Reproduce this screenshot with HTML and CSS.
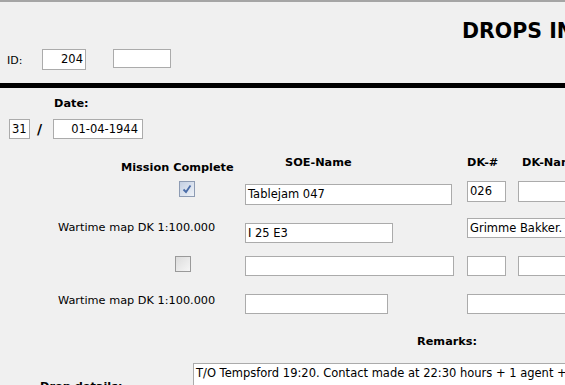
FILE: index.html
```html
<!DOCTYPE html>
<html lang="en">
<head>
  <meta charset="UTF-8" />
  <title>Drops</title>
  <link rel="stylesheet" href="styles.css">
</head>
<body>
<div class="form">
  <section class="header">
    <h1 class="title">DROPS INFORMATION</h1>
    <div class="id-row">
      <span class="lbl id-lbl">ID:</span>
      <div class="box id-box right">204</div>
      <div class="box id-extra"></div>
    </div>
  </section>
  <div class="rule"></div>

  <section class="main">
    <div class="row date-head">
      <span class="bold date-lbl">Date:</span>
    </div>
    <div class="row date-row">
      <div class="box day-box">31</div>
      <span class="bold slash">/</span>
      <div class="box date-box right">01-04-1944</div>
    </div>

    <div class="row heads">
      <span class="bold mission-lbl">Mission Complete</span>
      <span class="bold soe-lbl">SOE-Name</span>
      <span class="bold dknr-lbl">DK-#</span>
      <span class="bold dkname-lbl">DK-Name</span>
    </div>

    <div class="row r1">
      <span class="check checked c1">
        <svg width="10" height="10" viewBox="0 0 10 10"><path d="M1.5 5.5 L4 8 L8.5 1.5" fill="none" stroke="#4a6ca8" stroke-width="1.8"/></svg>
      </span>
      <div class="box soe1">Tablejam 047</div>
      <div class="box dk1">026</div>
      <div class="box dkn1"></div>
    </div>

    <div class="row r2">
      <span class="lbl map-lbl">Wartime map DK 1:100.000</span>
      <div class="box map1">I 25 E3</div>
      <div class="box place1">Grimme Bakker.</div>
    </div>

    <div class="row r3">
      <span class="check c2"></span>
      <div class="box soe2"></div>
      <div class="box dk2"></div>
      <div class="box dkn2"></div>
    </div>

    <div class="row r4">
      <span class="lbl map-lbl map-lbl2">Wartime map DK 1:100.000</span>
      <div class="box map2"></div>
      <div class="box place2"></div>
    </div>

    <div class="row remarks-head">
      <span class="bold remarks-lbl">Remarks:</span>
    </div>
    <div class="row remarks-row">
      <span class="bold notes-lbl">Drop details:</span>
      <div class="box remarks">T/O Tempsford 19:20. Contact made at 22:30 hours + 1 agent + 6 containers dropped.</div>
    </div>
  </section>
</div>
</body>
</html>
```

FILE: styles.css
```css
body {
  margin: 0;
  background-color: #f0f0f0;
  font-family: "DejaVu Sans", Verdana, sans-serif;
  font-size: 11px;
  color: #000;
  overflow: hidden;
}
.form {
  width: 565px;
  height: 385px;
  overflow: hidden;
  border-top: 2px solid #a5a5a5;
  box-sizing: border-box;
}
.header {
  height: 81px;
}
.title {
  margin: 0;
  padding: 17px 0 0 462px;
  height: 30px;
  font-size: 20.5px;
  font-weight: bold;
  white-space: nowrap;
}
.id-row {
  display: flex;
  align-items: flex-start;
}
.rule {
  height: 5px;
  background-color: #000;
}
.row {
  display: flex;
  align-items: flex-start;
  white-space: nowrap;
}
.row > * {
  flex-shrink: 0;
}
.lbl {
  font-size: 11px;
}
.bold {
  font-weight: bold;
  font-size: 11.3px;
}
.box {
  background-color: #fff;
  border: 1px solid #ababab;
  box-sizing: border-box;
  height: 21px;
  line-height: 19px;
  padding: 0 2px;
  font-size: 11.5px;
  overflow: hidden;
  flex-shrink: 0;
}
.right {
  text-align: right;
}

/* header row */
.id-lbl { margin: 5px 0 0 7px; width: 35px; }
.id-box { width: 44px; }
.id-extra { margin-left: 27px; width: 58px; height: 19px; }

/* date */
.date-head { height: 31px; }
.date-lbl { margin: 9px 0 0 54px; }
.date-row { height: 22px; }
.day-box { margin-left: 9px; width: 21px; height: 20px; line-height: 18px; }
.slash { margin: 2px 0 0 7px; width: 14px; font-size: 14px; }
.date-box { margin-left: 2px; width: 90px; height: 20px; line-height: 18px; padding-right: 4px; }

/* column heads */
.heads { height: 40px; }
.mission-lbl { margin: 20px 0 0 121px; width: 164px; }
.soe-lbl { margin-top: 15px; width: 182px; }
.dknr-lbl { margin-top: 15px; width: 55px; }
.dkname-lbl { margin-top: 15px; }

/* checkbox */
.check {
  display: flex;
  align-items: center;
  justify-content: center;
  width: 16px;
  height: 16px;
  box-sizing: border-box;
  border: 1px solid #9a9a9a;
  background: linear-gradient(135deg, #dcdcdc, #f6f6f6);
}
.check.checked {
  background: linear-gradient(135deg, #c4cfe2, #eef2f8);
  border-color: #8d9bb3;
}

.r1 { height: 37px; }
.c1 { margin-left: 179px; }
.soe1 { margin: 3px 0 0 50px; width: 207px; }
.dk1 { margin-left: 15px; width: 39px; }
.dkn1 { margin-left: 12px; width: 60px; }

.r2 { height: 38px; }
.map-lbl { margin: 3px 0 0 58px; width: 187px; font-size: 11.3px; }
.map1 { margin-top: 5px; width: 148px; height: 20px; }
.place1 { margin-left: 74px; width: 110px; height: 20px; }

.r3 { height: 38px; }
.c2 { margin-left: 175px; }
.soe2 { margin-left: 54px; width: 209px; height: 20px; }
.dk2 { margin-left: 13px; width: 39px; height: 20px; }
.dkn2 { margin-left: 12px; width: 60px; height: 20px; }

.r4 { height: 36px; }
.map-lbl2 { margin-top: 0; }
.map2 { width: 143px; height: 20px; }
.place2 { margin-left: 79px; width: 110px; height: 20px; }

.remarks-head { height: 33px; }
.remarks-lbl { margin: 5px 0 0 417px; }

.remarks-row { height: 40px; }
.notes-lbl { margin: 17px 0 0 40px; width: 153px; }
.remarks {
  width: 400px;
  height: 40px;
  line-height: 18px;
  border-right: none;
}
```
